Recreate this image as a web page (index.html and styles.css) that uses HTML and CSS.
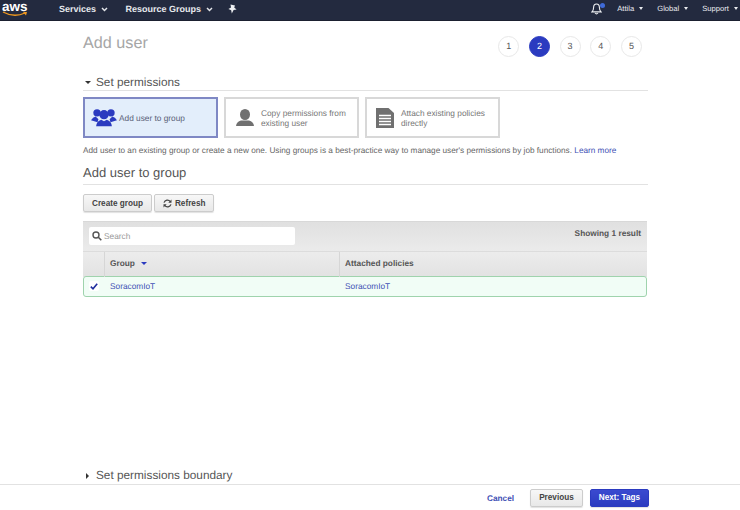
FILE: index.html
```html
<!DOCTYPE html>
<html lang="en">
<head>
<meta charset="utf-8">
<title>Add user</title>
<link rel="stylesheet" href="styles.css">
</head>
<body>
<header class="nav">
  <div class="logo">
    <span class="logo-text">aws</span>
    <svg class="logo-smile" width="26" height="6" viewBox="0 0 26 6"><path d="M1 1 Q12 7 23 2" fill="none" stroke="#f29a1f" stroke-width="1.3"/><path d="M21 1 L25 1 L24 4.5 Z" fill="#f29a1f"/></svg>
  </div>
  <nav class="nav-main">
    <span class="nav-item">Services <svg class="chev" width="7" height="5" viewBox="0 0 7 5"><path d="M1 1 L3.5 3.6 L6 1" fill="none" stroke="#e4e6ea" stroke-width="1.4"/></svg></span>
    <span class="nav-item nav-item-last">Resource Groups <svg class="chev" width="7" height="5" viewBox="0 0 7 5"><path d="M1 1 L3.5 3.6 L6 1" fill="none" stroke="#e4e6ea" stroke-width="1.4"/></svg></span>
    <svg class="pin" width="9" height="10" viewBox="0 0 9 10"><path d="M2.5 0.5 L7 1.5 L6.2 3.6 L8.6 5.6 L5.6 6 L3.8 9.5 L3.2 6.2 L0.4 5 L3 3.4 Z" fill="#eef0f3"/></svg>
  </nav>
  <div class="nav-right">
    <span class="bell">
      <svg width="11" height="12" viewBox="0 0 11 12"><path d="M5.5 1 C3.3 1 2.6 2.8 2.6 4.6 C2.6 6.8 1.9 8 1 8.9 L10 8.9 C9.1 8 8.4 6.8 8.4 4.6 C8.4 2.8 7.7 1 5.5 1 Z" fill="none" stroke="#eef0f3" stroke-width="1.1"/><path d="M4 10 Q5.5 11.8 7 10" fill="none" stroke="#eef0f3" stroke-width="1.1"/></svg>
      <span class="bell-dot"></span>
    </span>
    <span class="nav-sm nav-user">Attila <i class="caret-light"></i></span>
    <span class="nav-sm nav-global">Global <i class="caret-light"></i></span>
    <span class="nav-sm">Support <i class="caret-light"></i></span>
  </div>
</header>

<main class="page">
  <div class="title-row">
    <h1 class="title">Add user</h1>
    <ol class="steps">
      <li class="step">1</li>
      <li class="step step-active">2</li>
      <li class="step">3</li>
      <li class="step">4</li>
      <li class="step">5</li>
    </ol>
  </div>

  <h2 class="section-head"><i class="caret-down"></i>Set permissions</h2>

  <div class="cards">
    <div class="card card-active">
      <svg class="card-icon-group" width="26" height="19" viewBox="0 0 28 20" fill="#2b3bc0">
        <circle cx="6.5" cy="5" r="4"/><circle cx="21.5" cy="5" r="4"/>
        <path d="M0 13 Q2 9.5 5 9 L8 12 L7 15 Z"/><path d="M28 13 Q26 9.5 23 9 L20 12 L21 15 Z"/>
        <circle cx="14" cy="7" r="5"/>
        <path d="M5.5 19.5 Q6 14 11 12.5 L14 14 L17 12.5 Q22 14 22.5 19.5 Z"/>
      </svg>
      <span class="card-text card-text-active">Add user to group</span>
    </div>
    <div class="card">
      <svg class="card-icon-user" width="18" height="17" viewBox="0 0 18 17" fill="#707070">
        <ellipse cx="9" cy="5.5" rx="5" ry="5.5"/>
        <path d="M0 17 Q0.5 12.5 5 11.5 L13 11.5 Q17.5 12.5 18 17 Z"/>
      </svg>
      <span class="card-text">Copy permissions from<br>existing user</span>
    </div>
    <div class="card">
      <svg class="card-icon-doc" width="18" height="20" viewBox="0 0 18 20">
        <path d="M0 0 L12.5 0 L18 5 L18 20 L0 20 Z" fill="#707070"/>
        <path d="M3 7.5 H15 M3 10.5 H15 M3 13.5 H15 M3 16.5 H15" stroke="#fff" stroke-width="1.3"/>
      </svg>
      <span class="card-text">Attach existing policies<br>directly</span>
    </div>
  </div>

  <p class="desc">Add user to an existing group or create a new one. Using groups is a best-practice way to manage user's permissions by job functions. <a class="link" href="#">Learn more</a></p>

  <h2 class="subhead">Add user to group</h2>

  <div class="actions">
    <button class="btn">Create group</button>
    <button class="btn"><svg class="refresh" width="9" height="9" viewBox="0 0 9 9"><path d="M1 3.6 A3.6 3.6 0 0 1 7.3 2.6 M8 5.4 A3.6 3.6 0 0 1 1.7 6.4" fill="none" stroke="#444" stroke-width="1.2"/><path d="M8.5 0.5 V3.8 H5.3 Z M0.5 8.5 V5.2 H3.7 Z" fill="#444"/></svg>Refresh</button>
  </div>

  <section class="table">
    <div class="toolbar">
      <label class="search">
        <svg width="10" height="10" viewBox="0 0 10 10"><circle cx="4" cy="4" r="3" fill="none" stroke="#555" stroke-width="1.4"/><path d="M6.3 6.3 L9.3 9.3" stroke="#555" stroke-width="1.6"/></svg>
        <span class="search-ph">Search</span>
      </label>
      <span class="result-count">Showing 1 result</span>
    </div>
    <div class="thead">
      <div class="th th-check"></div>
      <div class="th th-group">Group <i class="caret-blue"></i></div>
      <div class="th th-pol">Attached policies</div>
    </div>
    <div class="row">
      <div class="td-check"><span class="checkbox"><svg width="8" height="7" viewBox="0 0 8 7"><path d="M0.8 3.6 L3 5.8 L7.2 0.8" fill="none" stroke="#1f2f9e" stroke-width="1.6"/></svg></span></div>
      <div class="td-group"><a class="link" href="#">SoracomIoT</a></div>
      <div class="td-pol"><a class="link" href="#">SoracomIoT</a></div>
    </div>
  </section>

  <h2 class="boundary"><i class="caret-right"></i>Set permissions boundary</h2>
</main>

<footer class="footer">
  <a class="cancel" href="#">Cancel</a>
  <button class="btn btn-prev">Previous</button>
  <button class="btn btn-next">Next: Tags</button>
</footer>
</body>
</html>
```

FILE: styles.css
```css
* { box-sizing: border-box; }
html, body { margin: 0; height: 100%; }
body {
  width: 740px;
  height: 510px;
  overflow: hidden;
  position: relative;
  background: #fff;
  font-family: "Liberation Sans", Arial, sans-serif;
  color: #444;
  text-rendering: geometricPrecision;
}
.nav {
  height: 21px;
  background: #232a3f;
  border-bottom: 1px solid #1b2030;
  display: flex;
  align-items: center;
  color: #e9ebef;
}
.logo { position: relative; width: 59px; height: 20px; padding-left: 2px; flex: none; }
.logo-text { display: block; font-size: 13.5px; font-weight: 700; line-height: 14px; color: #fff; }
.logo-smile { position: absolute; left: 2px; top: 11px; }
.nav-main { display: flex; align-items: center; font-size: 9px; font-weight: 700; margin-top: -3px; }
.nav-item { margin-right: 18px; white-space: nowrap; }
.nav-item-last { margin-right: 15px; }
.chev { margin-left: 2px; vertical-align: 0; }
.pin { display: block; }
.nav-right { margin-left: auto; display: flex; align-items: center; font-size: 7.6px; padding-right: 2px; margin-top: -3px; }
.bell { position: relative; width: 13px; height: 12px; margin-right: 13px; }
.bell svg { display: block; }
.bell-dot { position: absolute; left: 9px; top: 0; width: 5px; height: 5px; border-radius: 50%; background: #3f6ad8; }
.nav-sm { white-space: nowrap; }
.nav-user { margin-right: 14px; }
.nav-global { margin-right: 14px; }
.caret-light { display: inline-block; margin-left: 3px; vertical-align: 1px; border: 2.5px solid transparent; border-top: 3px solid #e9ebef; border-bottom: 0; }

.page { padding: 0 92px 0 83px; }
.title-row { display: flex; justify-content: space-between; height: 50px; }
.title { margin: 12px 0 0; font-size: 16.2px; line-height: 20px; font-weight: 400; color: #a6a6a6; }
.steps { list-style: none; display: flex; gap: 9.7px; margin: 15px 6px 0 0; padding: 0; }
.step {
  width: 21px; height: 21px; border-radius: 50%;
  border: 1px solid #e8e8e8; background: #fff;
  font-size: 9px; line-height: 19px; text-align: center; color: #555;
}
.step-active { background: #2b3bc0; border-color: #2b3bc0; color: #fff; }

.section-head {
  margin: 3px 0 0; height: 17px;
  border-bottom: 1px solid #e2e2e2;
  font-size: 11.8px; line-height: 16px; font-weight: 400; color: #555;
  display: flex; align-items: flex-start;
}
.caret-down { border: 3px solid transparent; border-top: 3px solid #333; border-bottom: 0; margin: 7px 5px 0 2px; }
.cards { display: flex; gap: 6px; margin-top: 6px; }
.card {
  width: 135px; height: 41px;
  border: 2px solid #d8d8d8;
  display: flex; align-items: center;
  background: #fff;
}
.card-active { background: #e3eefb; border-color: #7f88c4; }
.card-icon-group { margin: 0 2px 0 6px; flex: none; }
.card-icon-user { margin: 0 7px 0 10px; flex: none; }
.card-icon-doc { margin: 0 7px 0 9px; flex: none; }
.card-text { font-size: 8.3px; line-height: 10.5px; color: #777; padding-top: 1px; }
.card-text-active { color: #5a6178; }
.desc { margin: 7px 0 0; font-size: 8.23px; line-height: 12px; color: #666; white-space: nowrap; }
.link { color: #3f51b5; text-decoration: none; }
.subhead {
  margin: 8px 0 0; height: 20px;
  border-bottom: 1px solid #e2e2e2;
  font-size: 13px; line-height: 16px; font-weight: 400; color: #555;
}
.actions { display: flex; gap: 2px; margin-top: 9px; }
.btn {
  height: 18px; padding: 0 8px;
  border: 1px solid #ccc; border-radius: 2px;
  background: linear-gradient(#f7f7f7, #e8e8e8);
  box-shadow: 0 1px 1px rgba(0,0,0,.12);
  font: 700 8.2px "Liberation Sans", Arial, sans-serif;
  color: #444;
  display: flex; align-items: center;
}
.refresh { margin-right: 3px; }
.table { margin-top: 9px; width: 564px; }
.toolbar {
  height: 30px;
  background: linear-gradient(#e0e0e0, #ebebeb);
  border-top: 1px solid #d8d8d8;
  display: flex; align-items: center; justify-content: space-between;
  padding: 0 6px;
}
.search {
  width: 206px; height: 18px; margin-bottom: 2px;
  background: #fff; border-radius: 2px;
  display: flex; align-items: center; padding-left: 3px; gap: 2px;
}
.search-ph { font-size: 8.3px; color: #999; }
.result-count { font-size: 8.3px; font-weight: 700; color: #555; margin-top: -8px; }
.thead {
  height: 26px; display: flex;
  background: linear-gradient(#ececec, #e2e2e2);
  border-top: 1px solid #dcdcdc;
}
.th { font-size: 8.3px; font-weight: 700; color: #555; line-height: 22px; padding-left: 5px; }
.th-check { width: 21px; padding: 0; }
.th-group { width: 235px; border-left: 1px solid #d6d6d6; }
.th-pol { flex: 1; border-left: 1px solid #d6d6d6; }
.caret-blue { display: inline-block; margin-left: 4px; vertical-align: 1px; border: 3px solid transparent; border-top: 3px solid #2b3bc0; border-bottom: 0; }
.row {
  height: 21px; margin-top: -1px; padding-bottom: 1px; display: flex; align-items: center;
  background: #f1fdf6;
  border: 1px solid #9fd3ad; border-radius: 3px;
  font-size: 8.3px;
}
.td-check { width: 20px; display: flex; justify-content: center; }
.checkbox { width: 10px; height: 10px; background: #fff; border-radius: 2px; display: flex; align-items: center; justify-content: center; }
.td-group { width: 235px; padding-left: 6px; }
.td-pol { padding-left: 6px; }
.boundary {
  position: absolute; left: 83px; top: 468px; margin: 0;
  font-size: 11.8px; line-height: 15px; font-weight: 400; color: #555;
  display: flex; align-items: flex-start;
}
.caret-right { border: 3px solid transparent; border-left: 3px solid #333; border-right: 0; margin: 5px 7px 0 3px; }
.footer {
  position: absolute; left: 0; right: 0; top: 484px; height: 26px;
  border-top: 1px solid #e2e2e2; background: #fff;
  display: flex; align-items: center; justify-content: flex-end;
  padding: 0 91px 0 0;
}
.cancel { font-size: 8.3px; font-weight: 700; color: #3f51b5; text-decoration: none; margin-right: 16px; }
.btn-prev { margin-right: 7px; }
.btn-next { background: linear-gradient(#3a4ad0, #2b3bc0); border-color: #2b3bc0; color: #fff; }
```
